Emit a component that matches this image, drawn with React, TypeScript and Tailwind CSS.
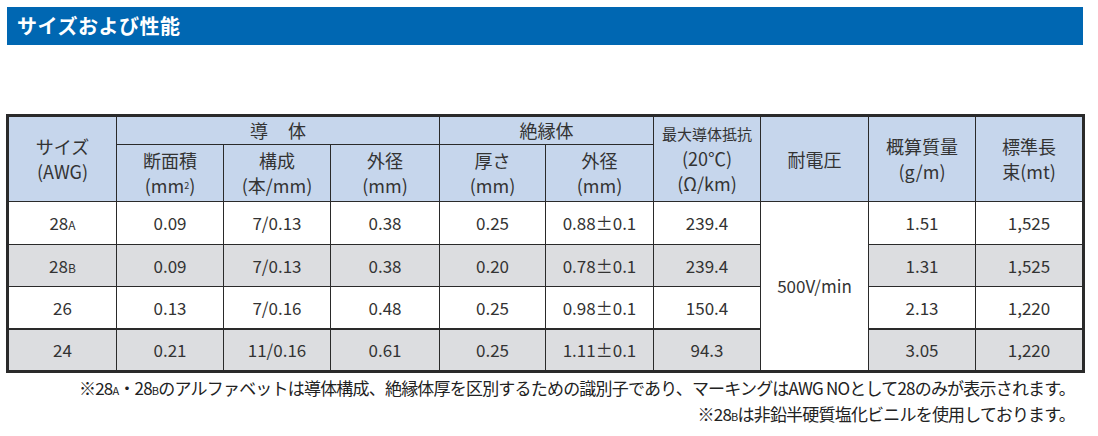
const jp = "font-['Noto_Sans_CJK_JP','Noto_Sans',sans-serif]";

type Row = {
  size: string;
  suffix?: string;
  area: string;
  comp: string;
  od: string;
  thick: string;
  insOd: string;
  res: string;
  mass: string;
  len: string;
  gray: boolean;
};

const rows: Row[] = [
  { size: "28", suffix: "A", area: "0.09", comp: "7/0.13", od: "0.38", thick: "0.25", insOd: "0.88±0.1", res: "239.4", mass: "1.51", len: "1,525", gray: false },
  { size: "28", suffix: "B", area: "0.09", comp: "7/0.13", od: "0.38", thick: "0.20", insOd: "0.78±0.1", res: "239.4", mass: "1.31", len: "1,525", gray: true },
  { size: "26", area: "0.13", comp: "7/0.16", od: "0.48", thick: "0.25", insOd: "0.98±0.1", res: "150.4", mass: "2.13", len: "1,220", gray: false },
  { size: "24", area: "0.21", comp: "11/0.16", od: "0.61", thick: "0.25", insOd: "1.11±0.1", res: "94.3", mass: "3.05", len: "1,220", gray: true },
];

const th = "border border-[#2a2a2a] bg-[#c6d6ec] font-normal text-[#333] text-center align-middle text-[18px] leading-[25px]";
const td = "border border-[#2a2a2a] text-center align-middle text-[17px] text-[#333]";

export default function App() {
  return (
    <div className={`w-[1098px] h-[436px] bg-white ${jp}`}>
      <div className="pt-[7px] pl-[7px] pr-[15px]">
        <div className="h-[38px] bg-[#0067b2] flex items-center pl-[10px]">
          <h2 className="text-white font-bold text-[20px] tracking-[0.5px]">サイズおよび性能</h2>
        </div>
      </div>

      <div className="pl-[6px] pt-[69px]">
        <table className="border-collapse border-[3px] border-[#2a2a2a] table-fixed w-[1076px]">
          <colgroup>
            <col className="w-[109px]" />
            <col className="w-[107px]" />
            <col className="w-[107px]" />
            <col className="w-[109px]" />
            <col className="w-[106px]" />
            <col className="w-[108px]" />
            <col className="w-[107px]" />
            <col className="w-[108px]" />
            <col className="w-[107px]" />
            <col className="w-[108px]" />
          </colgroup>
          <thead>
            <tr className="h-[29px]">
              <th rowSpan={2} className={th}>
                サイズ
                <br />
                (AWG)
              </th>
              <th colSpan={3} className={th}>
                導<span className="inline-block w-[20px]" />体
              </th>
              <th colSpan={2} className={th}>絶縁体</th>
              <th rowSpan={2} className={`${th} pb-[2px]`}>
                <span className="text-[15px]">最大導体抵抗</span>
                <br />
                (20℃)
                <br />
                (Ω/km)
              </th>
              <th rowSpan={2} className={th}>耐電圧</th>
              <th rowSpan={2} className={th}>
                概算質量
                <br />
                (g/m)
              </th>
              <th rowSpan={2} className={th}>
                標準長
                <br />
                束(mt)
              </th>
            </tr>
            <tr className="h-[57px]">
              <th className={th}>
                断面積
                <br />
                (mm<sup className="text-[9px]">2</sup>)
              </th>
              <th className={th}>
                構成
                <br />
                (本/mm)
              </th>
              <th className={th}>
                外径
                <br />
                (mm)
              </th>
              <th className={th}>
                厚さ
                <br />
                (mm)
              </th>
              <th className={th}>
                外径
                <br />
                (mm)
              </th>
            </tr>
          </thead>
          <tbody>
            {rows.map((r, i) => (
              <tr
                key={i}
                className={`${r.gray ? "bg-[#dcdde0]" : "bg-white"} ${i === 3 ? "border-t-2 border-[#2a2a2a]" : ""} h-[42.5px]`}
              >
                <td className={td}>
                  {r.size}
                  {r.suffix && <span className="text-[12px]">{r.suffix}</span>}
                </td>
                <td className={td}>{r.area}</td>
                <td className={td}>{r.comp}</td>
                <td className={td}>{r.od}</td>
                <td className={td}>{r.thick}</td>
                <td className={td}>{r.insOd}</td>
                <td className={td}>{r.res}</td>
                {i === 0 && (
                  <td rowSpan={4} className={`${td} bg-white`}>
                    500V/min
                  </td>
                )}
                <td className={td}>{r.mass}</td>
                <td className={td}>{r.len}</td>
              </tr>
            ))}
          </tbody>
        </table>
      </div>

      <div className="pr-[23px] pt-[3px] text-right text-[17px] leading-[23px] text-[#222] tracking-[-0.8px]">
        <p>
          ※28<span className="text-[11px]">A</span>・28<span className="text-[11px]">B</span>のアルファベットは導体構成、絶縁体厚を区別するための識別子であり、マーキングはAWG NOとして28のみが表示されます。
        </p>
        <p>
          ※28<span className="text-[11px]">B</span>は非鉛半硬質塩化ビニルを使用しております。
        </p>
      </div>
    </div>
  );
}
